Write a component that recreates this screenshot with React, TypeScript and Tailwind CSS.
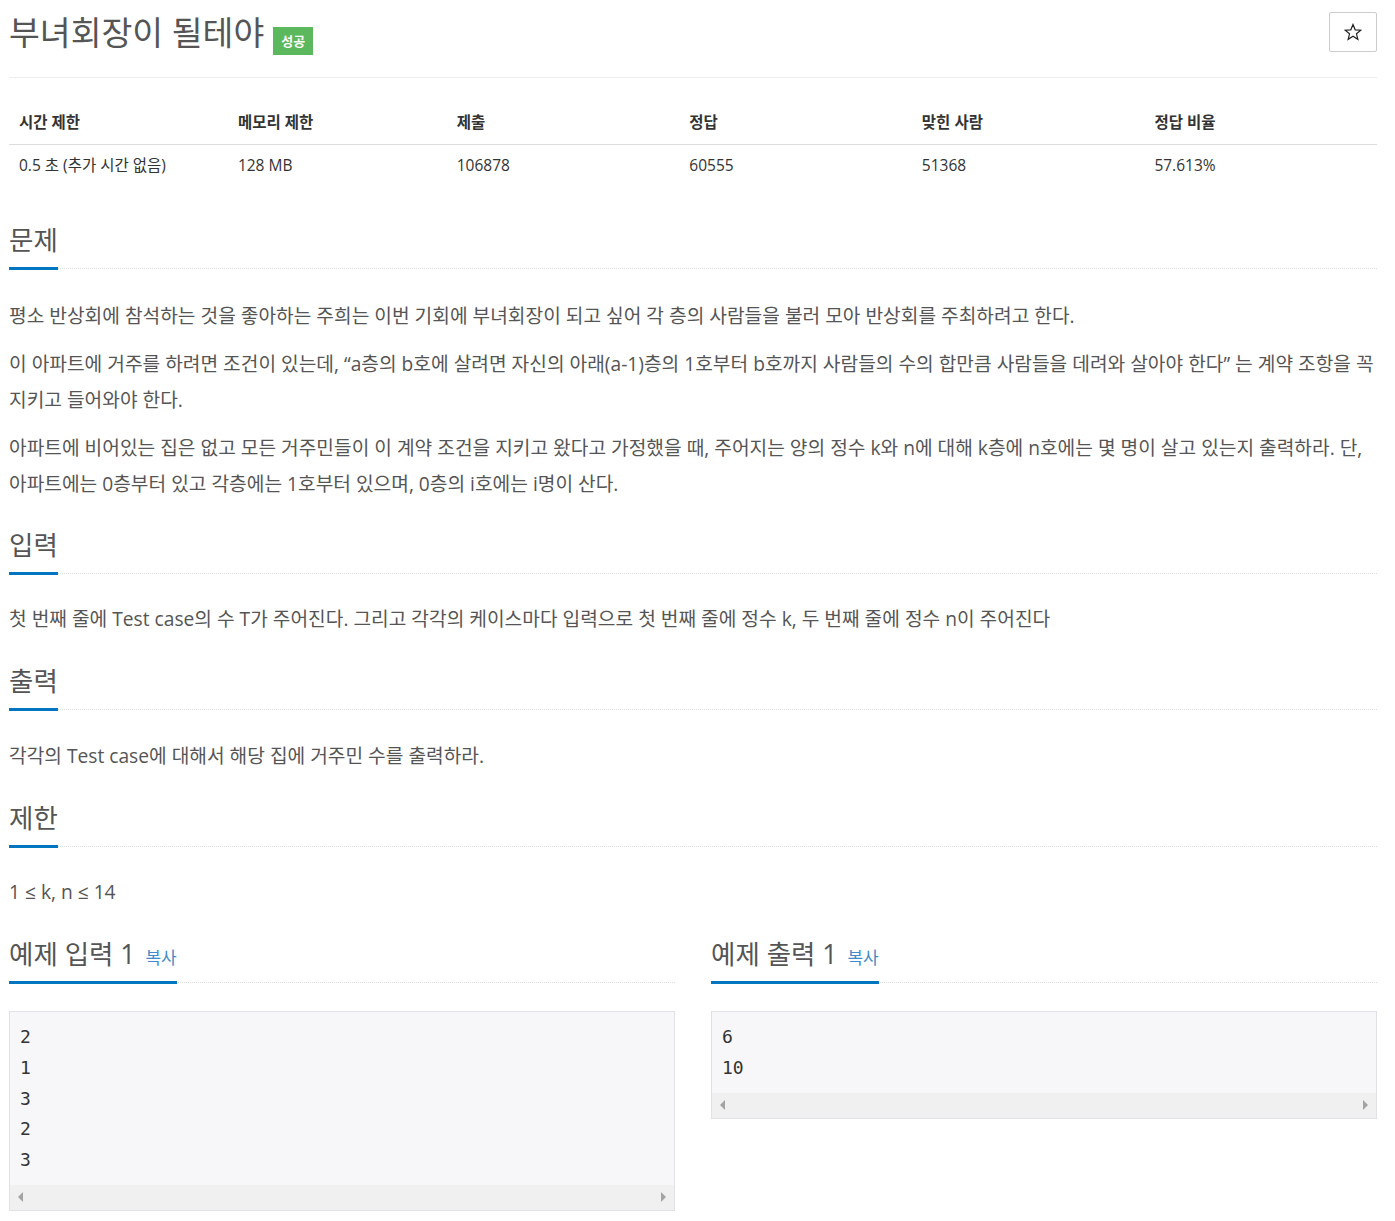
import React from "react";

const font = { fontFamily: '"Open Sans", "Noto Sans CJK KR", sans-serif' };

function Headline({ children }: { children: React.ReactNode }) {
  return (
    <div className="border-b border-dotted border-[#ddd]">
      <h2 className="inline-block text-[26.5px] leading-[27px] pb-[13px] border-b-[3px] border-[#0076c0] -mb-[2px] text-[#555] font-normal">
        {children}
      </h2>
    </div>
  );
}

function Copy() {
  return <span className="ml-[10px] text-[17px] leading-none text-[#428bca] align-baseline">복사</span>;
}

function Arrow({ dir }: { dir: "left" | "right" }) {
  return (
    <svg width="6" height="10" viewBox="0 0 6 10">
      {dir === "left" ? <polygon points="5,0 5,10 0,5" fill="#a3a3a3" /> : <polygon points="1,0 1,10 6,5" fill="#a3a3a3" />}
    </svg>
  );
}

function Sample({ lines }: { lines: string[] }) {
  return (
    <div className="border border-[#e1e1e8] bg-[#f7f7f9]">
      <pre
        className="pt-[10px] pb-[9px] px-[10px] text-[18px] leading-[30.75px] text-[#333]"
        style={{ fontFamily: '"DejaVu Sans Mono", monospace' }}
      >
        {lines.join("\n")}
      </pre>
      <div className="h-[25px] bg-[#f0f0f0] flex items-center justify-between px-[8px]">
        <Arrow dir="left" />
        <Arrow dir="right" />
      </div>
    </div>
  );
}

export default function App() {
  const stats = [
    ["시간 제한", "0.5 초 (추가 시간 없음)", "w-[16%]"],
    ["메모리 제한", "128 MB", "w-[16%]"],
    ["제출", "106878", "w-[17%]"],
    ["정답", "60555", "w-[17%]"],
    ["맞힌 사람", "51368", "w-[17%]"],
    ["정답 비율", "57.613%", "w-[17%]"],
  ];

  return (
    <div className="bg-white min-h-screen pl-[9px] pr-[18px] pb-[10px]" style={font}>
      {/* 제목 */}
      <div className="flex items-start justify-between pt-[12px] pb-[22px] border-b border-[#eee]">
        <h1 className="flex items-start text-[33.5px] leading-[41px] text-[#555] font-normal">
          부녀회장이 될테야
          <span className="ml-[9px] mt-[15px] bg-[#5cb85c] text-white text-[13px] leading-[28px] font-bold px-[8px]">
            성공
          </span>
        </h1>
        <button className="w-[48px] h-[40px] border border-[#ccc] rounded-[2px] bg-white flex items-center justify-center">
          <svg width="18" height="18" viewBox="0 0 24 24">
            <polygon
              points="12,2 14.9,9.1 22.5,9.6 16.6,14.4 18.5,21.8 12,17.7 5.5,21.8 7.4,14.4 1.5,9.6 9.1,9.1"
              fill="none"
              stroke="#222"
              strokeWidth="1.6"
              strokeLinejoin="miter"
            />
          </svg>
        </button>
      </div>

      <table className="w-full mt-[22px] text-[15.5px] table-fixed">
        <thead>
          <tr className="border-b border-[#ddd]">
            {stats.map(([h, , w]) => (
              <th key={h} className={`${w} text-left font-bold text-[#333] px-[10px] pt-[12px] pb-[12px] leading-[20px]`}>
                {h}
              </th>
            ))}
          </tr>
        </thead>
        <tbody>
          <tr>
            {stats.map(([h, v]) => (
              <td key={h} className="text-[#333] px-[10px] pt-[10px] pb-[10px] leading-[20px]">
                {v}
              </td>
            ))}
          </tr>
        </tbody>
      </table>

      <div className="text-[19.2px] leading-[36px] text-[#555]">
        <section className="mt-[40px]">
          <Headline>문제</Headline>
          <div className="mt-[29px]">
            <p className="mb-[12px]">
              평소 반상회에 참석하는 것을 좋아하는 주희는 이번 기회에 부녀회장이 되고 싶어 각 층의 사람들을 불러 모아 반상회를 주최하려고 한다.
            </p>
            <p className="mb-[12px]">
              이 아파트에 거주를 하려면 조건이 있는데, “a층의 b호에 살려면 자신의 아래(a-1)층의 1호부터 b호까지 사람들의 수의 합만큼 사람들을 데려와 살아야 한다” 는 계약 조항을 꼭 지키고 들어와야 한다.
            </p>
            <p className="mb-[12px]">
              아파트에 비어있는 집은 없고 모든 거주민들이 이 계약 조건을 지키고 왔다고 가정했을 때, 주어지는 양의 정수 k와 n에 대해 k층에 n호에는 몇 명이 살고 있는지 출력하라. 단, 아파트에는 0층부터 있고 각층에는 1호부터 있으며, 0층의 i호에는 i명이 산다.
            </p>
          </div>
        </section>

        <section className="mt-[28px]">
          <Headline>입력</Headline>
          <div className="mt-[27px]">
            <p className="mb-[12px]">
              첫 번째 줄에 Test case의 수 T가 주어진다. 그리고 각각의 케이스마다 입력으로 첫 번째 줄에 정수 k, 두 번째 줄에 정수 n이 주어진다
            </p>
          </div>
        </section>

        <section className="mt-[29px]">
          <Headline>출력</Headline>
          <div className="mt-[28px]">
            <p className="mb-[12px]">각각의 Test case에 대해서 해당 집에 거주민 수를 출력하라.</p>
          </div>
        </section>

        <section className="mt-[29px]">
          <Headline>제한</Headline>
          <div className="mt-[27px]">
            <p className="mb-[12px]">1 ≤ k, n ≤ 14</p>
          </div>
        </section>

        <div className="grid grid-cols-2 gap-[36px] mt-[29px]">
          <section>
            <Headline>
              예제 입력 1<Copy />
            </Headline>
            <div className="mt-[28px]">
              <Sample lines={["2", "1", "3", "2", "3"]} />
            </div>
          </section>
          <section>
            <Headline>
              예제 출력 1<Copy />
            </Headline>
            <div className="mt-[28px]">
              <Sample lines={["6", "10"]} />
            </div>
          </section>
        </div>
      </div>
    </div>
  );
}
